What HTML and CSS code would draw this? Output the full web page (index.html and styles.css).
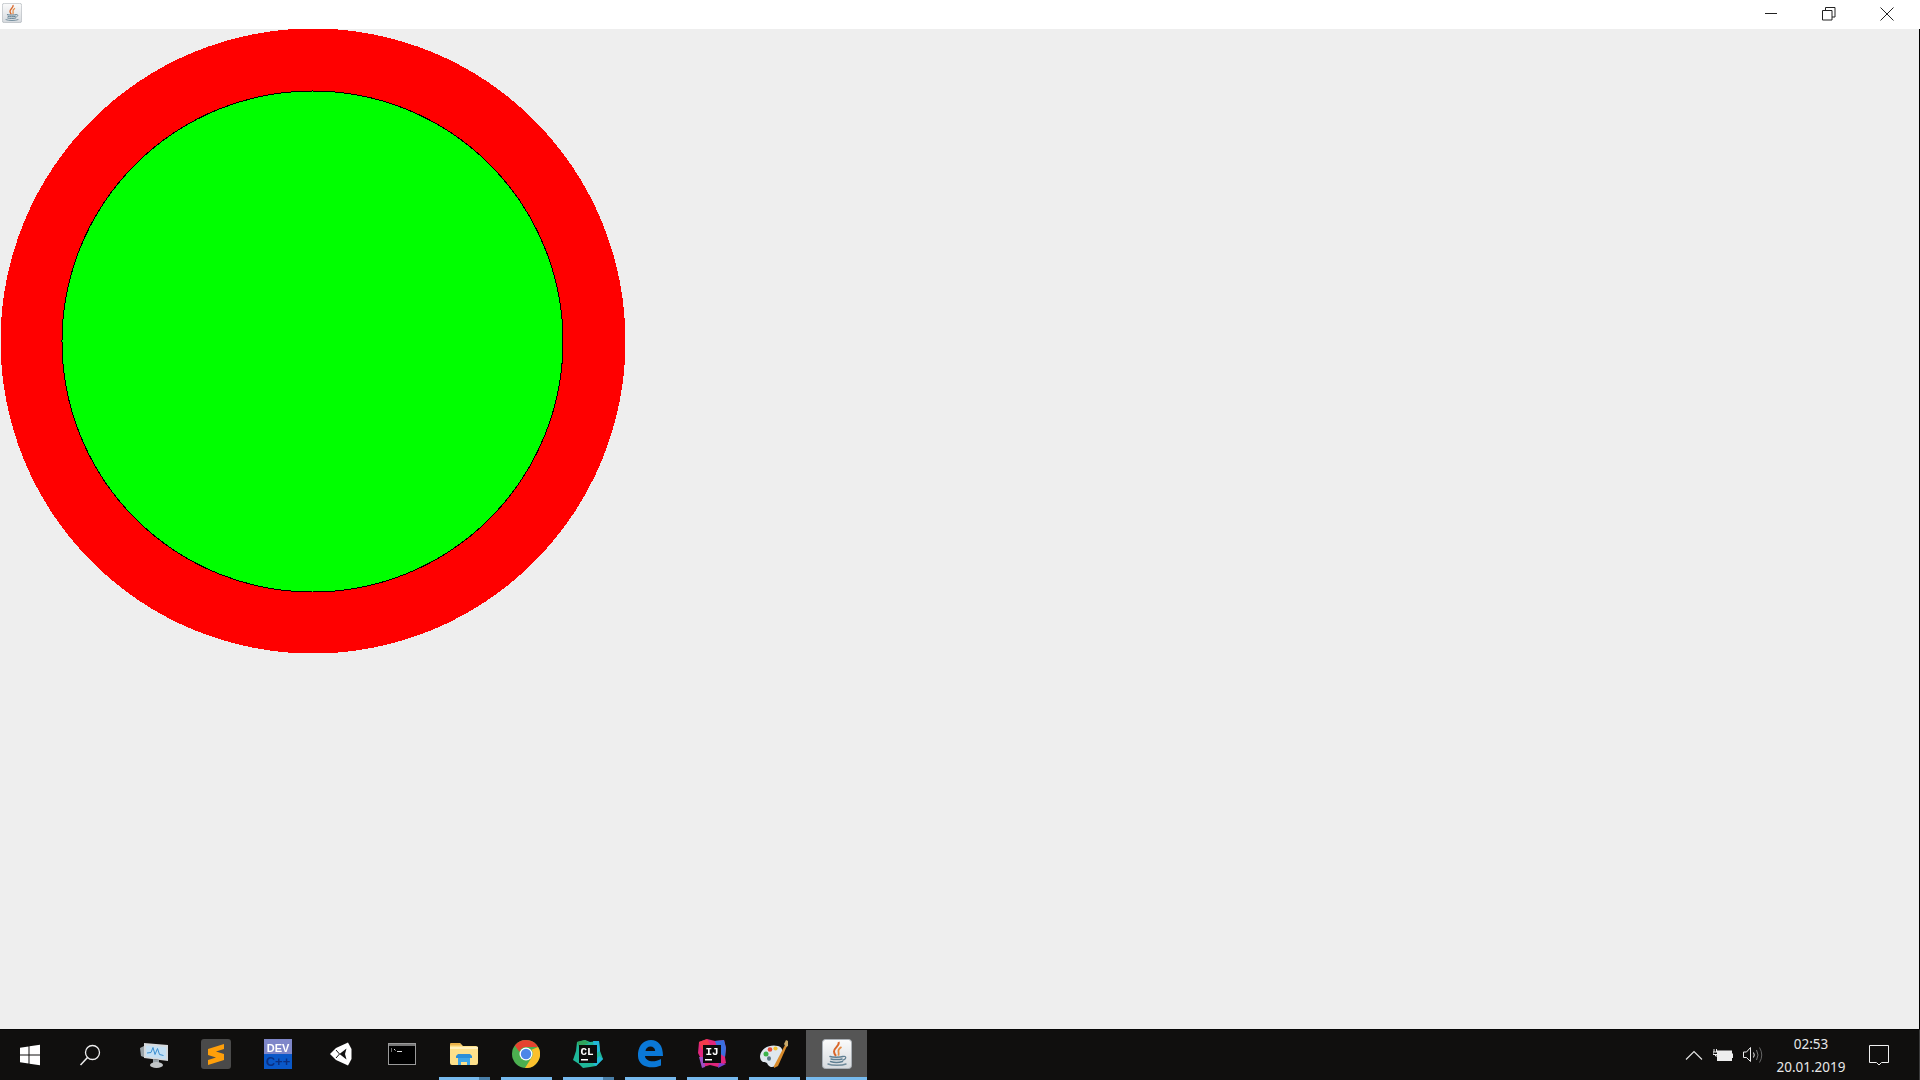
FILE: index.html
```html
<!DOCTYPE html>
<html lang="en">
<head>
<meta charset="utf-8">
<title>Java window</title>
<link rel="stylesheet" href="styles.css">
</head>
<body>
<svg class="defs" width="0" height="0" aria-hidden="true">
  <defs>
    <linearGradient id="tile" x1="0" y1="0" x2="0" y2="1"><stop offset="0" stop-color="#fbfbfb"/><stop offset="1" stop-color="#d6dade"/></linearGradient>
    <symbol id="java" viewBox="0 0 30 30">
      <rect x="0.5" y="0.5" width="29" height="29" rx="3" fill="url(#tile)" stroke="#aab0b6"/>
      <path d="M16.500 3c1.800 3.500-4.500 5.500-4.500 9.500 0 2 1 3.300 2 4.500" fill="none" stroke="#d9662a" stroke-width="2"/>
      <path d="M19.500 8c-2.500 1.500-3.500 3-3 5 .3 1.200.5 2.200-.2 3.700" fill="none" stroke="#e58a42" stroke-width="1.800"/>
      <path d="M8 17.500c2.500.9 10 .9 13 0M9 20c2.500.8 8.500.8 11 0M8.500 22.500c3 .9 9 .9 12 0" fill="none" stroke="#5f7f92" stroke-width="1.500" stroke-linecap="round"/>
      <path d="M21 17.500c3.500-.8 4 2.500-.5 3.800" fill="none" stroke="#5f7f92" stroke-width="1.200"/>
      <path d="M6 25c4 1.700 14 1.700 18 0" fill="none" stroke="#6f8a9a" stroke-width="1.400" stroke-linecap="round"/>
    </symbol>
  </defs>
</svg>

<header class="titlebar">
  <svg class="app-icon" width="20" height="20"><use href="#java"/></svg>
  <div class="controls">
    <div class="control">
      <svg width="14" height="14" viewBox="0 0 14 14"><path d="M1 6.500h12" stroke="#222" fill="none"/></svg>
    </div>
    <div class="control">
      <svg width="14" height="14" viewBox="0 0 14 14"><path d="M.5 3.500h9.500v9.500H.5zM3.500 3.500V.5H13v9.500h-3" stroke="#222" fill="none"/></svg>
    </div>
    <div class="control">
      <svg width="14" height="14" viewBox="0 0 14 14"><path d="M.5 .5l13 13M13.500 .5l-13 13" stroke="#222" fill="none"/></svg>
    </div>
  </div>
</header>

<main class="canvas">
  <svg class="circles" width="626" height="624" viewBox="0 0 626 624" shape-rendering="crispEdges">
    <circle cx="313" cy="312" r="312.500" fill="#ff0000"/>
    <circle cx="312.500" cy="312.500" r="250.500" fill="#00ff00" stroke="#000000" stroke-width="1"/>
  </svg>
</main>

<footer class="taskbar">
  <div class="sys-btn">
    <svg width="22" height="22" viewBox="0 0 22 22"><path d="M1 3.700l8.500-1.200v8H1zM10.500 2.300L21 .8v9.700H10.500zM1 11.500h8.500v8L1 18.300zM10.500 11.500H21v9.700l-10.500-1.500z" fill="#fff"/></svg>
  </div>
  <div class="sys-btn">
    <svg width="22" height="22" viewBox="0 0 22 22"><circle cx="13.500" cy="8.500" r="7" fill="none" stroke="#eee" stroke-width="1.300"/><path d="M8.500 13.500L1.500 21" stroke="#eee" stroke-width="1.500" fill="none"/></svg>
  </div>

  <div class="task task-first">
    <svg width="30" height="30" viewBox="0 0 30 30">
      <path d="M1 9l6-3v13l-5-2z" fill="#9aa3a8"/>
      <path d="M5 4l24 2v16L5 19z" fill="#d6dadd"/>
      <path d="M7 6.500l20 1.700v12L7 17.500z" fill="#c4e0f4"/>
      <path d="M8 14l4-.5 2-5 2 7 2.500-6 2 6 4 1" fill="none" stroke="#3a8fd0" stroke-width="1"/>
      <path d="M14 20l6 1v3h-6z" fill="#9aa3a8"/>
      <ellipse cx="17.500" cy="26" rx="6.500" ry="3" fill="#c2c6c8"/>
    </svg>
  </div>
  <div class="task">
    <svg width="30" height="30" viewBox="0 0 30 30">
      <rect width="30" height="30" rx="3" fill="#4a4a4a"/>
      <path d="M23 5L7 10v6l8 2.500L7 21v5l16-5v-6l-8-2.500L23 10z" fill="#ff9f0a"/>
    </svg>
  </div>
  <div class="task">
    <svg width="28" height="30" viewBox="0 0 28 30">
      <rect width="28" height="15" fill="#7f87c9"/>
      <rect y="15" width="28" height="15" fill="#0a58c8"/>
      <text class="dev-text" x="14" y="12.500" text-anchor="middle">DEV</text>
      <text class="cpp-text" x="14" y="27" text-anchor="middle">C++</text>
    </svg>
  </div>
  <div class="task">
    <svg class="unity" width="22" height="24" viewBox="0 0 22 24">
      <path d="M0 12L6 6 18 .5 21.500 7V17L18 23.500 6 18z" fill="#fff"/>
      <path d="M9.500 12L6 8M9.500 12L6 16" stroke="#111" stroke-width="1" fill="none"/>
      <path d="M9.500 12L16.500 6.500 15 12 16.500 17.500z" fill="#111"/>
    </svg>
  </div>
  <div class="task">
    <svg width="28" height="22" viewBox="0 0 28 22">
      <rect x=".5" y=".5" width="27" height="21" fill="#000" stroke="#9a9a9a"/>
      <rect x="1" y="1" width="26" height="2" fill="#777"/>
      <path d="M3 6h1M3 8h1M6 6l1.500 1.500M9 8.500h5" stroke="#ddd" stroke-width="1" fill="none"/>
    </svg>
  </div>
  <div class="task running split">
    <svg width="28" height="24" viewBox="0 0 28 24">
      <path d="M0 3a2 2 0 0 1 2-2h8l3 3h13a2 2 0 0 1 2 2v15a2 2 0 0 1-2 2H2a2 2 0 0 1-2-2z" fill="#fde08a"/>
      <path d="M0 2.500a1.500 1.500 0 0 1 1.500-1.500h8L12 3.500H0z" fill="#eab24a"/>
      <path d="M0 5h28v2H0z" fill="#fff0bc"/>
      <path d="M8 12h12l2 2v2H6v-2z" fill="#2b8fd8"/>
      <path d="M8 16h12v7h-3v-3h-6v3H8z" fill="#3fa6e8"/>
    </svg>
  </div>
  <div class="task running">
    <svg width="28" height="28" viewBox="0 0 28 28">
      <circle cx="14" cy="14" r="14" fill="#4caf50"/>
      <path d="M14 0a14 14 0 0 1 12.100 7H14a7 7 0 0 0-6.600 4.700L2.800 5.600A14 14 0 0 1 14 0z" fill="#e5432f"/>
      <path d="M26.100 7A14 14 0 0 1 13 28l6.600-10.500A7 7 0 0 0 19.500 9.700L26.100 7z" fill="#fbc02d"/>
      <circle cx="14" cy="14" r="6.500" fill="#fff"/>
      <circle cx="14" cy="14" r="5.200" fill="#4a86e8"/>
    </svg>
  </div>
  <div class="task running split">
    <svg width="30" height="30" viewBox="0 0 30 30">
      <path d="M4 3l8-2 5 2 9-1 1 10 3 8-7 7-6 1-7 1-4-4-6-4 3-9z" fill="#1fb89a"/>
      <path d="M4 3l8-2 4 3-10 4z" fill="#2fa35c"/>
      <path d="M20 2l6 0 1 10-5 3z" fill="#22b7d8"/>
      <path d="M26 17l4 3-7 7-3-2z" fill="#22b7d8"/>
      <rect x="6" y="6" width="18" height="18" fill="#0b0b0b"/>
      <text class="ide-text" x="7.500" y="16">CL</text>
      <rect x="8" y="20" width="7" height="1.500" fill="#fff"/>
    </svg>
  </div>
  <div class="task running">
    <svg width="26" height="28" viewBox="0 0 26 28">
      <path d="M1 13C2 5 7 0 14 0c7 0 12 5 12 16H8c.4 5 8 7.500 16 3v6.500C13 30 1 26 1 16c0-1 0-2 0-3z" fill="#0a78d7"/>
      <path d="M8.500 11c.3-3 2.500-4.500 5-4.500 2.500 0 4.500 1.500 4.700 4.500z" fill="#111"/>
    </svg>
  </div>
  <div class="task running">
    <svg width="30" height="30" viewBox="0 0 30 30">
      <path d="M2 3l8-3 8 2 9-1 2 8-1 9 1 6-8 4-8-2-7 2-2-8-3-6z" fill="#e0267c"/>
      <path d="M2 3l8-3 3 5-8 6z" fill="#f23b4c"/>
      <path d="M18 2l9-1 2 8-1 9-6-4z" fill="#3a6fe0"/>
      <path d="M2 18l5 0 1 10-3 1z" fill="#9b4fc6"/>
      <path d="M22 24l7 1-8 4z" fill="#7a3fd0"/>
      <rect x="6" y="6" width="18" height="18" fill="#0b0b0b"/>
      <text class="ide-text" x="8.500" y="16">IJ</text>
      <rect x="8" y="20" width="7" height="1.500" fill="#fff"/>
    </svg>
  </div>
  <div class="task running">
    <svg width="30" height="30" viewBox="0 0 30 30">
      <path d="M1 17C2 9 11 5 19 7c4 1 6 5 3 9l-6 11c-3 2-5 1-7-1-1-3-3-3-5-3-2-1-3-3-3-6z" fill="#dfe7ee"/>
      <circle cx="7" cy="15" r="2.500" fill="#3cb34a"/>
      <circle cx="11" cy="10.500" r="2.300" fill="#e44d3a"/>
      <circle cx="16.500" cy="9.500" r="2.100" fill="#f2c230"/>
      <ellipse cx="10" cy="19.500" rx="2" ry="2.200" fill="#5a7684"/>
      <path d="M15 27L26 6l2 1-9 20-4 2z" fill="#d98b2b"/>
      <path d="M25 5l2-4 2 1 0 5-2 1z" fill="#c9a96a"/>
    </svg>
  </div>
  <div class="task active">
    <svg width="30" height="30"><use href="#java"/></svg>
  </div>

  <div class="tray">
    <svg class="tray-icon" width="18" height="10" viewBox="0 0 18 10"><path d="M1 9.500l8-8 8 8" fill="none" stroke="#e8e8e8" stroke-width="1.100"/></svg>
    <svg class="tray-icon" width="20" height="14" viewBox="0 0 20 14">
      <rect x="4.500" y="3" width="14" height="9.500" fill="#eee" stroke="#eee"/>
      <rect x="19" y="5.500" width="1" height="4.500" fill="#eee"/>
      <path d="M1 1v3M3.500 1v3M0 4h5v2.500H0zM2.500 6.500V8H5" stroke="#eee" fill="none"/>
    </svg>
    <svg class="tray-icon" width="21" height="18" viewBox="0 0 21 18">
      <path d="M.5 6h3l4-4.500v14l-4-4h-3z" fill="none" stroke="#eee"/>
      <path d="M10.500 6.500q1.500 2.500 0 5" fill="none" stroke="#eee"/>
      <path d="M13.500 4q3 5 0 10" fill="none" stroke="#777"/>
      <path d="M16.500 1.500q4.500 7.500 0 15" fill="none" stroke="#666"/>
    </svg>
    <div class="clock">
      <span>02:53</span>
      <span>20.01.2019</span>
    </div>
    <svg class="notify" width="20" height="21" viewBox="0 0 20 21"><path d="M.5 .5h19v17h-7l-2.500 2.500-2.500-2.500h-7z" fill="none" stroke="#f0f0f0"/></svg>
  </div>
</footer>
</body>
</html>
```
FILE: styles.css
```css
* { box-sizing: border-box; }
html, body { height: 100%; }
body {
  margin: 0;
  display: flex;
  flex-direction: column;
  height: 100vh;
  overflow: hidden;
  background: #eeeeee;
  font-family: "Noto Sans", "Open Sans", sans-serif;
}
.defs { display: block; height: 0; }

.titlebar {
  flex: 0 0 29px;
  display: flex;
  align-items: center;
  justify-content: space-between;
  background: #ffffff;
  padding-left: 2px;
}
.app-icon { display: block; margin-top: -3px; }
.controls { display: flex; padding-right: 4px; }
.control {
  width: 58px;
  height: 29px;
  display: flex;
  align-items: center;
  justify-content: center;
}
.control svg { margin-bottom: 2px; }

.canvas {
  flex: 1 1 auto;
  background: #eeeeee;
  border-right: 1px solid #000000;
  min-height: 0;
}
.circles { display: block; }

.taskbar {
  flex: 0 0 51px;
  display: flex;
  align-items: stretch;
  background: #100f0e;
  border-top: 1px solid #050505;
  border-right: 1px solid #3a3a3a;
}
.sys-btn {
  width: 60px;
  display: flex;
  align-items: center;
  justify-content: center;
}
.task {
  width: 62px;
  display: flex;
  align-items: center;
  justify-content: center;
  position: relative;
  padding-bottom: 2px;
}
.task svg { filter: blur(0.4px); }
.task .unity { margin-left: 2px; }
.task-first { margin-left: 3px; }
.running::after {
  content: "";
  position: absolute;
  left: 6px;
  right: 5px;
  bottom: 0;
  height: 3px;
  background: #76b9ed;
}
.split::before {
  content: "";
  position: absolute;
  right: 5px;
  bottom: 0;
  width: 11px;
  height: 3px;
  background: #4a7fa8;
  z-index: 1;
}
.active {
  margin-left: 1px;
  width: 61px;
  background: #555555;
  box-shadow: inset 0 -3px 0 #76b9ed;
}

.tray {
  margin-left: auto;
  display: flex;
  align-items: center;
  color: #e8e8e8;
}
.tray-icon { display: block; margin-right: 10px; }
.clock {
  width: 74px;
  display: flex;
  flex-direction: column;
  align-items: center;
  gap: 4px;
  padding-top: 2px;
  font-size: 13.5px;
  line-height: 19px;
  white-space: nowrap;
}
.notify { display: block; margin-left: 21px; margin-right: 30px; }

.dev-text {
  font-family: "Liberation Sans", sans-serif;
  font-weight: 700;
  font-size: 11px;
  fill: #ffffff;
}
.cpp-text {
  font-family: "Liberation Sans", sans-serif;
  font-weight: 700;
  font-size: 13px;
  fill: #0b2f80;
}
.ide-text {
  font-family: "Liberation Mono", monospace;
  font-weight: 700;
  font-size: 11px;
  fill: #ffffff;
}
```
